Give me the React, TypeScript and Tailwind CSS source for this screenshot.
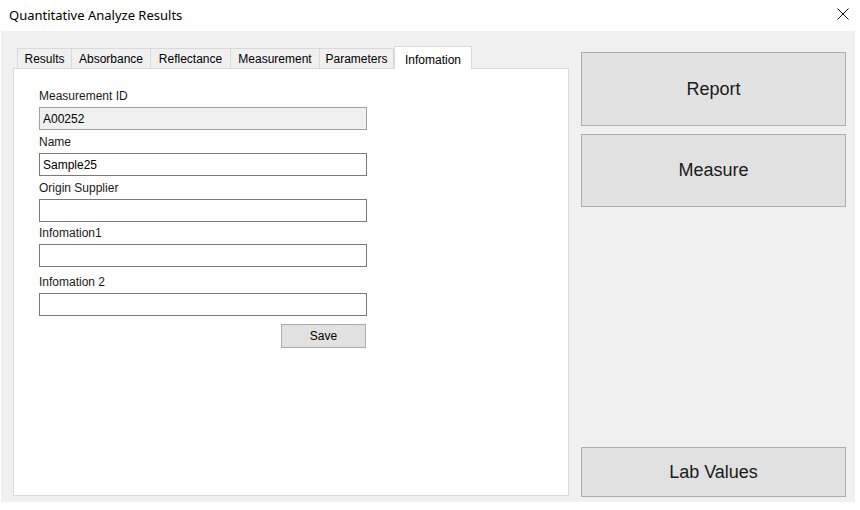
const tabs = [
  { label: 'Results', w: 'w-[55px]' },
  { label: 'Absorbance', w: 'w-[79px]' },
  { label: 'Reflectance', w: 'w-[80px]' },
  { label: 'Measurement', w: 'w-[89px]' },
  { label: 'Parameters', w: 'w-[74px]' },
];

const fields = [
  { label: 'Measurement ID', value: 'A00252', disabled: true, mt: 'mt-0' },
  { label: 'Name', value: 'Sample25', disabled: false, mt: 'mt-[5px]' },
  { label: 'Origin Supplier', value: '', disabled: false, mt: 'mt-[5px]' },
  { label: 'Infomation1', value: '', disabled: false, mt: 'mt-[4px]' },
  { label: 'Infomation 2', value: '', disabled: false, mt: 'mt-[8px]' },
];

function Field({ label, value, disabled, mt }: { label: string; value: string; disabled: boolean; mt: string }) {
  return (
    <div className={mt}>
      <div className="h-[14px] leading-[14px] text-[12px] text-[#1a1a1a]">{label}</div>
      <div
        className={`mt-[4px] h-[23px] w-[328px] border flex items-center px-[3px] text-[12px] text-black ${
          disabled ? 'bg-[#f0f0f0] border-[#a0a0a0]' : 'bg-white border-[#7a7a7a]'
        }`}
      >
        {value}
      </div>
    </div>
  );
}

function WinButton({ children, h }: { children: React.ReactNode; h: string }) {
  return (
    <button className={`${h} w-[265px] bg-[#e1e1e1] border border-[#adadad] text-[18px] text-[#1a1a1a] flex items-center justify-center`}>
      {children}
    </button>
  );
}

export default function App() {
  return (
    <div className="w-[860px] h-[510px] bg-white overflow-hidden" style={{ fontFamily: '"Liberation Sans", Arial, sans-serif' }}>
      {/* title bar */}
      <div className="h-[31px] flex items-center justify-between pl-[9px] pr-[11px]">
        <span className="text-[13px] text-black" style={{ fontFamily: '"Noto Sans", sans-serif' }}>
          Quantitative Analyze Results
        </span>
        <svg width="12" height="12" viewBox="0 0 12 12" className="mt-[-4px]">
          <path d="M0.5 0.5 L11.5 11.5 M11.5 0.5 L0.5 11.5" stroke="#111" strokeWidth="1" fill="none" />
        </svg>
      </div>

      {/* body */}
      <div className="ml-[1px] w-[854px] h-[471px] bg-[#f0f0f0] flex">
        {/* tab control */}
        <div className="ml-[12px] w-[556px] pt-[14px] flex flex-col">
          <div className="h-[23px] flex items-end pl-[4px]">
            {tabs.map((t, i) => (
              <div
                key={t.label}
                className={`${t.w} h-[20px] border-t border-r border-[#d9d9d9] bg-[#f0f0f0] text-[12px] text-black flex items-center justify-center ${
                  i === 0 ? 'border-l' : ''
                }`}
              >
                {t.label}
              </div>
            ))}
            <div className="w-[78px] h-[23px] mb-[-1px] border border-b-0 border-[#d9d9d9] bg-white text-[12px] text-black flex items-start justify-center pt-[4px] relative z-10">
              Infomation
            </div>
          </div>
          <div className="h-[428px] bg-white border border-[#d9d9d9] pl-[25px] pt-[20px]">
            {fields.map(f => (
              <Field key={f.label} {...f} />
            ))}
            <div className="w-[327px] flex justify-end mt-[8px]">
              <button className="w-[85px] h-[24px] bg-[#e1e1e1] border border-[#adadad] text-[12px] text-black flex items-center justify-center">
                Save
              </button>
            </div>
          </div>
        </div>

        {/* action buttons */}
        <div className="ml-[12px] pt-[21px] pb-[5px] flex flex-col">
          <WinButton h="h-[74px]">Report</WinButton>
          <div className="mt-[8px]">
            <WinButton h="h-[73px]">Measure</WinButton>
          </div>
          <div className="mt-auto">
            <WinButton h="h-[50px]">Lab Values</WinButton>
          </div>
        </div>
      </div>
    </div>
  );
}
